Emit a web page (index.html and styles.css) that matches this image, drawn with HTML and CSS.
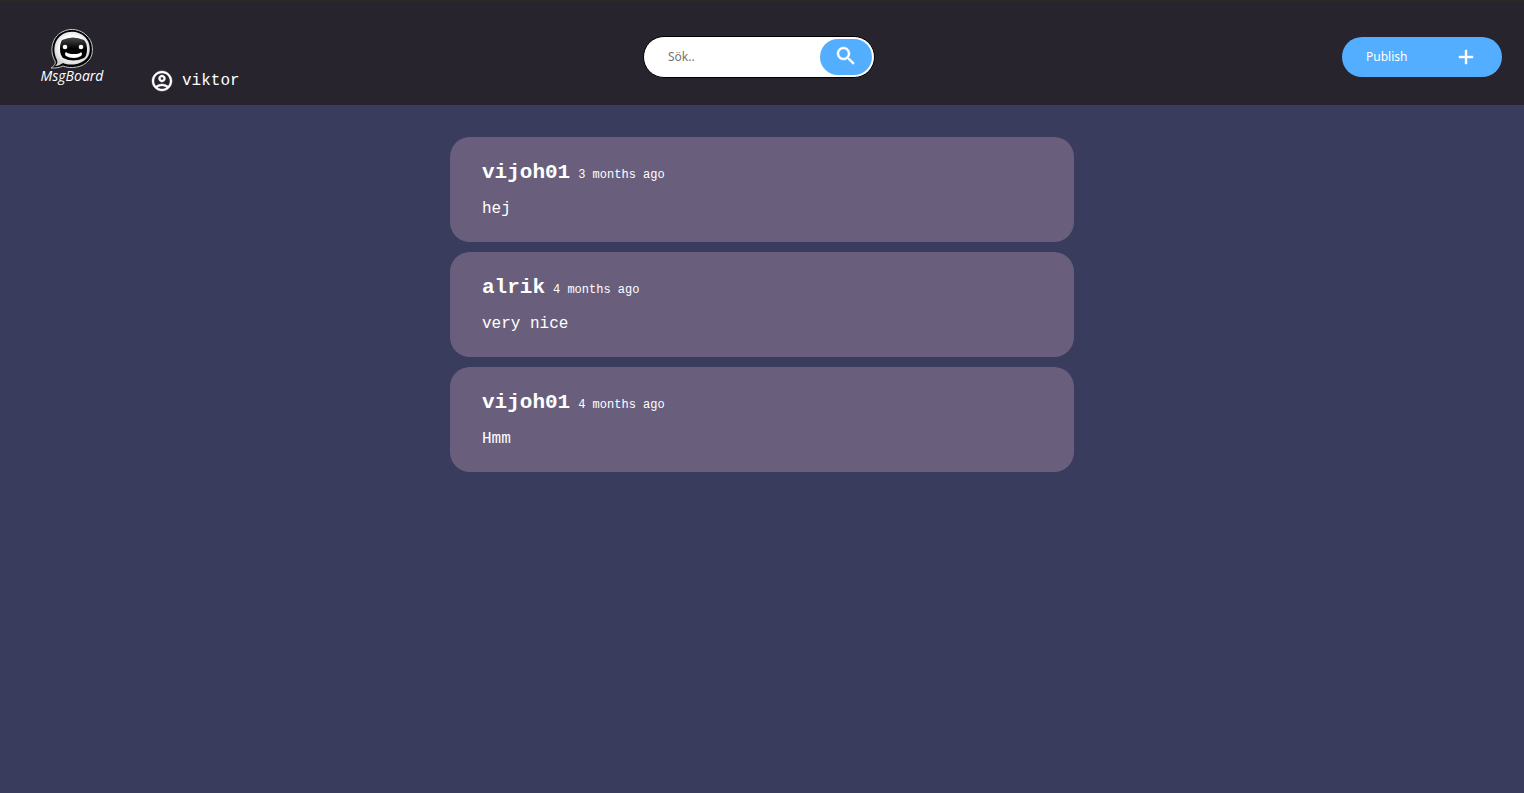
FILE: index.html
```html
<!DOCTYPE html>
<html lang="sv">
<head>
<meta charset="utf-8">
<title>MsgBoard</title>
<link rel="stylesheet" href="styles.css">
</head>
<body>
<header class="topbar">
  <div class="identity">
    <a class="logo" href="#" aria-label="MsgBoard">
      <svg class="logo-art" viewBox="0 0 68 60" aria-hidden="true">
        <defs>
          <radialGradient id="bubble" cx="50%" cy="45%" r="55%">
            <stop offset="60%" stop-color="#ffffff"/>
            <stop offset="100%" stop-color="#d2d2d2"/>
          </radialGradient>
          <linearGradient id="face" x1="0" y1="0" x2="0" y2="1">
            <stop offset="0" stop-color="#4a4a4a"/>
            <stop offset="0.5" stop-color="#000000"/>
          </linearGradient>
        </defs>
        <path d="M17 33C11 23 14 9 24 4C33-1 43 2 48 7C56 13 56 27 51 32C45 40 32 41 25 38C21 40 17 40 13 40C16 38 18 36 17 33Z" fill="#050505" stroke="#c4c4c4"/>
        <path d="M19 32C14 23 16 11 25 6C33 2 42 4 47 9C53 15 53 25 49 30C43 37 32 38 25 35C22 37 20 38 17 38C19 36 20 35 19 32Z" fill="url(#bubble)"/>
        <path d="M24 12Q35 7 46 12Q49 15 49 21Q49 28 46 30Q35 35 25 30Q22 27 22 21Q22 15 24 12Z" fill="url(#face)"/>
        <circle cx="27" cy="19" r="2.300" fill="#fff"/>
        <circle cx="43" cy="19" r="2.300" fill="#fff"/>
        <path d="M28 24Q30 26 36 26Q42 26 43 24Q45 26 43 28Q40 30 36 30Q31 30 28 28Q26 26 28 24Z" fill="#fff"/>
        <text class="logo-text" x="34" y="53" text-anchor="middle">MsgBoard</text>
      </svg>
    </a>
    <a class="user" href="#">
      <svg class="icon" viewBox="0 0 24 24" aria-hidden="true"><path d="M12 2C6.48 2 2 6.48 2 12s4.48 10 10 10 10-4.48 10-10S17.52 2 12 2zM7.35 18.5C8.66 17.56 10.26 17 12 17s3.34.56 4.65 1.5C15.34 19.44 13.740 20 12 20s-3.340-.56-4.650-1.500zM18.140 17.120C16.450 15.800 14.320 15 12 15s-4.450.8-6.140 2.120C4.700 15.730 4 13.950 4 12c0-4.420 3.580-8 8-8s8 3.580 8 8c0 1.950-.7 3.730-1.860 5.120zM12 6c-1.930 0-3.500 1.570-3.500 3.500S10.070 13 12 13s3.500-1.570 3.500-3.500S13.930 6 12 6zm0 5c-.83 0-1.500-.67-1.500-1.500S11.170 8 12 8s1.500.67 1.500 1.500S12.830 11 12 11z"/></svg>
      <span>viktor</span>
    </a>
  </div>
  <form class="search" role="search">
    <input class="search-input" type="text" placeholder="Sök.." aria-label="Sök">
    <button class="search-button" type="button" aria-label="Sök">
      <svg class="icon" viewBox="0 0 24 24" aria-hidden="true"><path d="M15.500 14h-.79l-.28-.27C15.410 12.590 16 11.110 16 9.500 16 5.910 13.090 3 9.500 3S3 5.910 3 9.500 5.910 16 9.500 16c1.610 0 3.090-.59 4.230-1.570l.27.28v.79l5 4.990L20.490 19l-4.990-5zm-6 0C7.010 14 5 11.990 5 9.500S7.010 5 9.500 5 14 7.010 14 9.500 11.990 14 9.500 14z"/></svg>
    </button>
  </form>
  <button class="publish" type="button">
    <span>Publish</span>
    <svg class="icon" viewBox="0 0 24 24" aria-hidden="true"><path d="M19 13h-6v6h-2v-6H5v-2h6V5h2v6h6v2z"/></svg>
  </button>
</header>
<main class="feed">
  <article class="post">
    <header class="post-head"><h2 class="author">vijoh01</h2><time class="age">3 months ago</time></header>
    <p class="message">hej</p>
  </article>
  <article class="post">
    <header class="post-head"><h2 class="author">alrik</h2><time class="age">4 months ago</time></header>
    <p class="message">very nice</p>
  </article>
  <article class="post">
    <header class="post-head"><h2 class="author">vijoh01</h2><time class="age">4 months ago</time></header>
    <p class="message">Hmm</p>
  </article>
</main>
</body>
</html>
```
FILE: styles.css
```css
* {
  box-sizing: border-box;
}

body {
  margin: 0;
  min-height: 100vh;
  background: #3a3c5e;
  color: #fff;
  font: 16px/20px "Liberation Mono", "Courier New", monospace;
}

.topbar {
  display: grid;
  grid-template-columns: 1fr auto 1fr;
  align-items: center;
  padding: 16px 22px 9px 16px;
  border-top: 2px solid #2b2827;
  background: #27242e;
}

.identity {
  display: flex;
  align-items: flex-end;
  gap: 44px;
  min-height: 78px;
  padding: 10px 0 3px 22px;
}

.logo,
.logo-art {
  display: block;
}

.logo {
  align-self: flex-start;
}

.logo-art {
  width: 68px;
  height: 60px;
  overflow: visible;
}

.logo-text {
  fill: #fff;
  font: italic 14px "Open Sans", "Noto Sans", sans-serif;
}

.icon {
  display: block;
  width: 24px;
  height: 24px;
  fill: currentColor;
  stroke: currentColor;
  stroke-width: 0.4px;
}

.user {
  display: flex;
  align-items: center;
  gap: 8px;
  color: #fff;
  text-decoration: none;
}

.search {
  display: flex;
  width: 232px;
  height: 42px;
  padding: 2px;
  border: 1px solid #000;
  border-radius: 21px;
  background: #fff;
}

.search-input {
  flex: 1;
  min-width: 0;
  padding: 0 0 0 22px;
  border: 0;
  background: none;
  outline: none;
  color: #333;
  font: 12px/16px "Noto Sans", sans-serif;
}

.search-input::placeholder {
  color: #757575;
}

.search-button {
  display: flex;
  justify-content: center;
  width: 52px;
  padding: 5px 0 0;
  border: 0;
  border-radius: 18px;
  background: #54aeff;
  color: #fff;
}

.publish {
  display: flex;
  justify-content: space-between;
  align-items: center;
  justify-self: end;
  width: 160px;
  height: 40px;
  padding: 0 24px;
  border: 0;
  border-radius: 20px;
  background: #54aeff;
  color: #fff;
  font: 12px/16px "Noto Sans", sans-serif;
}

.feed {
  display: grid;
  gap: 10px;
  max-width: 624px;
  margin: 32px auto;
}

.post {
  padding: 24px 32px 23px;
  border-radius: 20px;
  background: #695f7d;
}

.post-head {
  display: flex;
  align-items: baseline;
  gap: 8px;
}

.author {
  margin: 0;
  font-size: 21px;
  line-height: 24px;
}

.age {
  font-size: 12px;
}

.message {
  margin: 14px 0 0;
}
```
